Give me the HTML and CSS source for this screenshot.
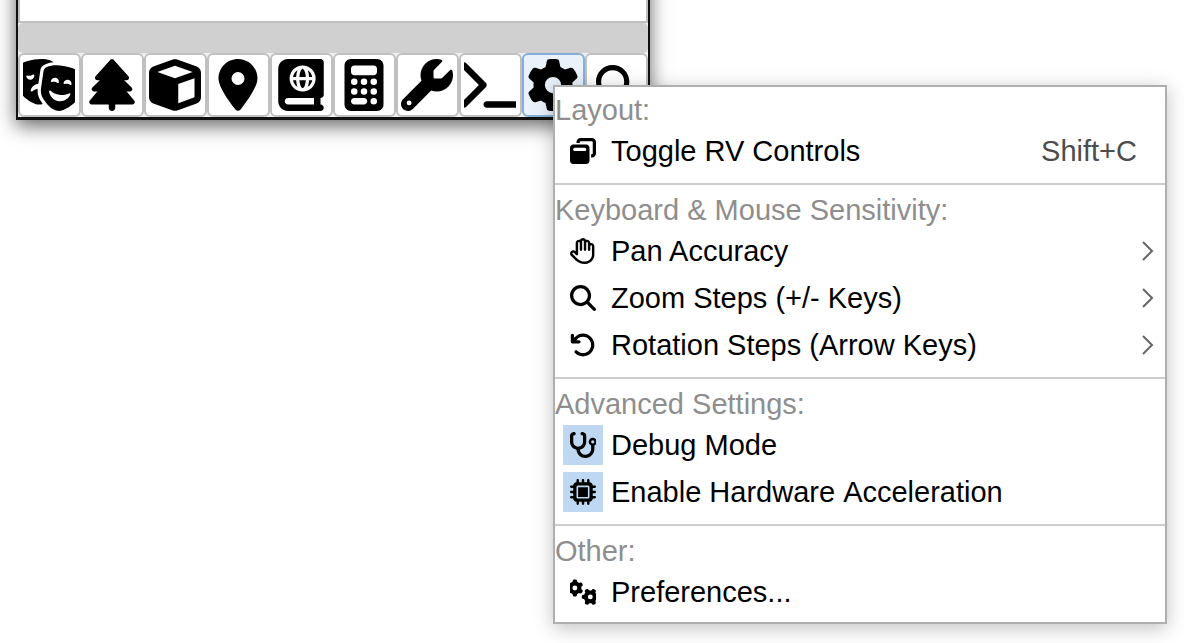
FILE: index.html
```html
<!DOCTYPE html>
<html lang="en">
<head>
<meta charset="utf-8">
<meta name="viewport" content="width=device-width, initial-scale=1">
<title>Settings menu</title>
<link rel="stylesheet" href="styles.css">
</head>
<body>
<main class="window">
  <div class="panel"></div>
  <div class="status"></div>
  <div class="toolbar" role="toolbar" aria-label="Tools">
    <button class="tool" type="button" aria-label="Scenes"><svg viewBox="64 0 512 512"><path d="M74.6 373.2c41.7 36.1 108 82.5 166.1 73.7c6.1-.9 12.1-2.5 18-4.5c-9.2-12.3-17.3-24.4-24.2-35.4c-21.9-35-28.8-75.2-25.9-113.6c-20.6 4.1-39.2 13-54.7 25.4c-6.5 5.2-16.3 1.3-14.8-7c6.4-33.5 33-60.9 68.2-66.3c2.6-.4 5.3-.7 7.9-.8l19.4-131.3c2-13.8 8-32.7 25-45.9C278.2 53.2 310.5 37 363.2 32.2c-.8-.7-1.6-1.4-2.4-2.1C340.6 14.5 288.4-11.5 175.7 5.6S20.5 63 5.7 83.9C0 91.9-.8 102 .6 111.8L24.8 276.1c5.5 37.3 21.5 72.6 49.8 97.2zm87.7-219.6c4.4-3.1 10.8-2 11.8 3.3c.1 .5 .2 1.1 .3 1.6c3.2 21.8-11.6 42-33.1 45.3s-41.5-11.8-44.7-33.5c-.1-.5-.1-1.1-.2-1.6c-.6-5.4 5.2-8.4 10.3-6.7c9 3 18.8 3.9 28.7 2.4s19.1-5.3 26.8-10.8zM261.6 390c29.4 46.9 79.5 110.9 137.6 119.7s124.5-37.5 166.1-73.7c28.3-24.5 44.3-59.8 49.8-97.2l24.2-164.3c1.4-9.8 .6-19.9-5.1-27.9c-14.8-20.9-57.3-61.2-170-78.3S299.4 77.2 279.2 92.8c-7.8 6-11.5 15.4-12.9 25.2L242.1 282.3c-5.5 37.3-.4 75.8 19.6 107.7zM404.5 235.3c-7.7-5.5-16.8-9.3-26.8-10.8s-19.8-.6-28.7 2.4c-5.1 1.7-10.9-1.3-10.3-6.7c.1-.5 .1-1.1 .2-1.6c3.2-21.8 23.2-36.8 44.7-33.5s36.3 23.5 33.1 45.3c-.1 .5-.2 1.1-.3 1.6c-1 5.3-7.4 6.4-11.8 3.3zm136.2 15.5c-1 5.3-7.4 6.4-11.8 3.3c-7.7-5.5-16.8-9.3-26.8-10.8s-19.8-.6-28.7 2.4c-5.1 1.7-10.9-1.3-10.3-6.7c.1-.5 .1-1.1 .2-1.6c3.2-21.8 23.2-36.8 44.7-33.5s36.3 23.5 33.1 45.3c-.1 .5-.2 1.1-.3 1.6zM530 350.2c-19.6 44.7-66.8 72.5-116.8 64.9s-87.1-48.2-93-96.7c-1-8.3 8.9-12.1 15.2-6.7c23.9 20.8 53.6 35.3 87 40.3s66.1 .1 94.9-12.8c7.6-3.4 16 3.2 12.6 10.9z"/></svg></button>
    <button class="tool" type="button" aria-label="Tree"><svg viewBox="-32 0 512 512"><path d="M210.6 5.9L62 169.4c-3.9 4.2-6 9.8-6 15.5C56 197.7 66.3 208 79.1 208H104L30.6 281.4c-4.2 4.2-6.6 10-6.6 16C24 309.9 34.1 320 46.6 320H80L5.4 409.5C1.9 413.7 0 419 0 424.5c0 13 10.5 23.5 23.5 23.5H192v32c0 17.7 14.3 32 32 32s32-14.3 32-32V448H424.5c13 0 23.5-10.5 23.5-23.5c0-5.5-1.9-10.8-5.4-15L368 320h33.4c12.5 0 22.6-10.1 22.6-22.6c0-6-2.4-11.8-6.6-16L344 208h24.9c12.7 0 23.1-10.3 23.1-23.1c0-5.7-2.1-11.3-6-15.5L237.4 5.9C234 2.1 229.1 0 224 0s-10 2.1-13.4 5.9z"/></svg></button>
    <button class="tool" type="button" aria-label="Object"><svg viewBox="0 0 512 512"><path d="M234.5 5.7c13.9-5 29.1-5 43.1 0l192 68.6C495 83.4 512 107.5 512 134.6V377.4c0 27-17 51.2-42.5 60.3l-192 68.6c-13.9 5-29.1 5-43.1 0l-192-68.6C17 428.6 0 404.5 0 377.4V134.6c0-27 17-51.2 42.5-60.3l192-68.6zM256 66L82.3 128 256 190l173.7-62L256 66zm32 368.6l160-57.1v-188L288 246.6v188z"/></svg></button>
    <button class="tool" type="button" aria-label="Location"><svg viewBox="-64 0 512 512"><path d="M215.7 499.2C267 435 384 279.4 384 192C384 86 298 0 192 0S0 86 0 192c0 87.4 117 243 168.3 307.2c12.3 15.3 35.1 15.3 47.4 0zM192 128a64 64 0 1 1 0 128 64 64 0 1 1 0-128z"/></svg></button>
    <button class="tool" type="button" aria-label="Atlas"><svg viewBox="-32 0 512 512"><path d="M0 96C0 43 43 0 96 0H384h32c17.7 0 32 14.3 32 32V352c0 17.7-14.3 32-32 32v64c17.7 0 32 14.3 32 32s-14.3 32-32 32H384 96c-53 0-96-43-96-96V96zM64 416c0 17.7 14.3 32 32 32H352V384H96c-17.7 0-32 14.3-32 32zM247.4 283.8c-3.7 3.7-6.2 4.2-7.4 4.2s-3.7-.5-7.4-4.2c-3.8-3.7-8-10-11.8-18.9c-6.2-14.5-10.8-34.3-12.2-56.9h63c-1.5 22.6-6 42.4-12.2 56.9c-3.8 8.9-8 15.2-11.8 18.9zm42.7-9.9c7.3-18.3 12-41.1 13.4-65.9h31.1c-4.7 27.9-21.4 51.7-44.5 65.9zm0-163.8c23.2 14.2 39.9 38 44.5 65.9H303.5c-1.4-24.7-6.1-47.5-13.4-65.9zM368 192a128 128 0 1 0 -256 0 128 128 0 1 0 256 0zM145.3 208h31.1c1.4 24.7 6.1 47.5 13.4 65.9c-23.2-14.2-39.9-38-44.5-65.9zm31.1-32H145.3c4.7-27.9 21.4-51.7 44.5-65.9c-7.3 18.3-12 41.1-13.4 65.9zm56.1-75.8c3.7-3.7 6.2-4.2 7.4-4.2s3.7 .5 7.4 4.2c3.8 3.7 8 10 11.8 18.9c6.2 14.5 10.8 34.3 12.2 56.9h-63c1.5-22.6 6-42.4 12.2-56.9c3.8-8.9 8-15.2 11.8-18.9z"/></svg></button>
    <button class="tool" type="button" aria-label="Calculator"><svg viewBox="-64 0 512 512"><path d="M64 0C28.7 0 0 28.7 0 64V448c0 35.3 28.7 64 64 64H320c35.3 0 64-28.7 64-64V64c0-35.3-28.7-64-64-64H64zM96 64H288c17.7 0 32 14.3 32 32v32c0 17.7-14.3 32-32 32H96c-17.7 0-32-14.3-32-32V96c0-17.7 14.3-32 32-32zm32 160a32 32 0 1 1 -64 0 32 32 0 1 1 64 0zM96 352a32 32 0 1 1 0-64 32 32 0 1 1 0 64zM64 416c0-17.7 14.3-32 32-32h96c17.7 0 32 14.3 32 32s-14.3 32-32 32H96c-17.7 0-32-14.3-32-32zM192 256a32 32 0 1 1 0-64 32 32 0 1 1 0 64zm32 64a32 32 0 1 1 -64 0 32 32 0 1 1 64 0zm64-64a32 32 0 1 1 0-64 32 32 0 1 1 0 64zm32 64a32 32 0 1 1 -64 0 32 32 0 1 1 64 0zM288 448a32 32 0 1 1 0-64 32 32 0 1 1 0 64z"/></svg></button>
    <button class="tool" type="button" aria-label="Tools"><svg viewBox="0 0 512 512"><path d="M352 320c88.4 0 160-71.6 160-160c0-15.3-2.2-30.1-6.2-44.2c-3.1-10.8-16.4-13.2-24.3-5.3l-76.8 76.8c-3 3-7.1 4.7-11.3 4.7H336c-8.8 0-16-7.2-16-16V118.6c0-4.2 1.7-8.3 4.7-11.3l76.8-76.8c7.9-7.9 5.4-21.2-5.3-24.3C382.1 2.2 367.3 0 352 0C263.6 0 192 71.6 192 160c0 19.1 3.4 37.5 9.5 54.5L19.9 396.1C7.2 408.8 0 426.1 0 444.1C0 481.6 30.4 512 67.9 512c18 0 35.3-7.2 48-19.9L297.5 310.5c17 6.2 35.4 9.5 54.5 9.5zM80 408a24 24 0 1 1 0 48 24 24 0 1 1 0-48z"/></svg></button>
    <button class="tool" type="button" aria-label="Console"><svg viewBox="32 0 512 512"><path d="M9.4 86.6C-3.1 74.1-3.1 53.9 9.4 41.4s32.8-12.5 45.3 0l192 192c12.5 12.5 12.5 32.8 0 45.3l-192 192c-12.5 12.5-32.8 12.5-45.3 0s-12.5-32.8 0-45.3L178.7 256 9.4 86.6zM256 416H544c17.7 0 32 14.3 32 32s-14.3 32-32 32H256c-17.7 0-32-14.3-32-32s14.3-32 32-32z"/></svg></button>
    <div class="tool-group">
      <button class="tool tool-open" type="button" aria-label="Settings" aria-haspopup="menu" aria-expanded="true"><svg viewBox="0 0 512 512"><path d="M495.9 166.6c3.2 8.7 .5 18.4-6.4 24.6l-43.3 39.4c1.1 8.3 1.7 16.8 1.7 25.4s-.6 17.1-1.7 25.4l43.3 39.4c6.9 6.2 9.6 15.9 6.4 24.6c-4.4 11.9-9.7 23.3-15.8 34.3l-4.7 8.1c-6.6 11-14 21.4-22.1 31.2c-5.9 7.2-15.7 9.6-24.5 6.8l-55.7-17.7c-13.4 10.3-28.2 18.9-44 25.4l-12.5 57.1c-2 9.1-9 16.3-18.2 17.8c-13.8 2.3-28 3.5-42.5 3.5s-28.7-1.2-42.5-3.5c-9.2-1.5-16.2-8.7-18.2-17.8l-12.5-57.1c-15.8-6.5-30.6-15.1-44-25.4L83.1 425.9c-8.8 2.8-18.6 .3-24.5-6.8c-8.1-9.8-15.5-20.2-22.1-31.2l-4.7-8.1c-6.1-11-11.4-22.4-15.8-34.3c-3.2-8.7-.5-18.4 6.4-24.6l43.3-39.4C64.6 273.1 64 264.6 64 256s.6-17.1 1.7-25.4L22.4 191.2c-6.9-6.2-9.6-15.9-6.4-24.6c4.4-11.9 9.7-23.3 15.8-34.3l4.7-8.1c6.6-11 14-21.4 22.1-31.2c5.9-7.2 15.7-9.6 24.5-6.8l55.7 17.7c13.4-10.3 28.2-18.9 44-25.4l12.5-57.1c2-9.1 9-16.3 18.2-17.8C227.3 1.2 241.5 0 256 0s28.7 1.2 42.5 3.5c9.2 1.5 16.2 8.7 18.2 17.8l12.5 57.1c15.8 6.5 30.6 15.1 44 25.4l55.7-17.7c8.8-2.8 18.6-.3 24.5 6.8c8.1 9.8 15.5 20.2 22.1 31.2l4.7 8.1c6.1 11 11.4 22.4 15.8 34.3zM256 336a80 80 0 1 0 0-160 80 80 0 1 0 0 160z"/></svg></button>
      <div class="menu" role="menu" aria-label="Settings">
        <section class="section">
          <h2 class="heading">Layout:</h2>
          <button class="item" type="button" role="menuitem"><span class="icon"><svg viewBox="0 0 512 512"><path d="M432 64H208c-8.8 0-16 7.2-16 16V96H128V80c0-44.2 35.8-80 80-80H432c44.2 0 80 35.8 80 80V304c0 44.2-35.8 80-80 80H416V320h16c8.8 0 16-7.2 16-16V80c0-8.8-7.2-16-16-16zM0 192c0-35.3 28.7-64 64-64H320c35.3 0 64 28.7 64 64V448c0 35.3-28.7 64-64 64H64c-35.3 0-64-28.7-64-64V192zm64 32c0 17.7 14.3 32 32 32H288c17.7 0 32-14.3 32-32s-14.3-32-32-32H96c-17.7 0-32 14.3-32 32z"/></svg></span><span class="label">Toggle RV Controls</span><span class="shortcut">Shift+C</span></button>
        </section>
        <section class="section">
          <h2 class="heading">Keyboard &amp; Mouse Sensitivity:</h2>
          <button class="item" type="button" role="menuitem" aria-haspopup="menu"><span class="icon"><svg viewBox="0 0 512 512"><path d="M256 0c-25.3 0-47.2 14.7-57.6 36c-7-2.6-14.5-4-22.4-4c-35.3 0-64 28.7-64 64V261.5l-2.7-2.7c-25-25-65.5-25-90.5 0s-25 65.5 0 90.5L106.5 437c48 48 113.1 75 181 75H296h8c1.5 0 3-.1 4.5-.4c91.7-6.2 165-79.4 171.1-171.1c.3-1.5 .4-3 .4-4.5V160c0-35.3-28.7-64-64-64c-5.5 0-10.9 .7-16 2V96c0-35.3-28.7-64-64-64c-7.9 0-15.4 1.4-22.4 4C303.2 14.7 281.3 0 256 0zM240 96.1c0 0 0-.1 0-.1V64c0-8.8 7.2-16 16-16s16 7.2 16 16V95.9c0 0 0 .1 0 .1V232c0 13.3 10.7 24 24 24s24-10.7 24-24V96c0 0 0 0 0-.1c0-8.8 7.2-16 16-16s16 7.2 16 16v55.9c0 0 0 .1 0 .1v80c0 13.3 10.7 24 24 24s24-10.7 24-24V160.1c0 0 0-.1 0-.1c0-8.8 7.2-16 16-16s16 7.2 16 16V332.9c-.1 .6-.1 1.3-.2 1.9c-3.4 69.7-59.3 125.6-129 129c-.6 0-1.3 .1-1.9 .2H296h-8.5c-55.2 0-108.1-21.9-147.1-60.9L52.7 315.3c-6.2-6.2-6.2-16.4 0-22.6s16.4-6.2 22.6 0L119 336.4c6.9 6.9 17.2 8.9 26.2 5.2s14.8-12.5 14.8-22.2V96c0-8.8 7.2-16 16-16c8.8 0 16 7.1 16 15.9V232c0 13.3 10.7 24 24 24s24-10.7 24-24V96.1z"/></svg></span><span class="label">Pan Accuracy</span><svg class="chevron" viewBox="0 0 12 20"><path d="M1 1l9 9-9 9"/></svg></button>
          <button class="item" type="button" role="menuitem" aria-haspopup="menu"><span class="icon"><svg viewBox="0 0 512 512"><path d="M416 208c0 45.9-14.9 88.3-40 122.7L502.6 457.4c12.5 12.5 12.5 32.8 0 45.3s-32.8 12.5-45.3 0L330.7 376c-34.4 25.2-76.8 40-122.7 40C93.1 416 0 322.9 0 208S93.1 0 208 0S416 93.1 416 208zM208 352a144 144 0 1 0 0-288 144 144 0 1 0 0 288z"/></svg></span><span class="label">Zoom Steps (+/- Keys)</span><svg class="chevron" viewBox="0 0 12 20"><path d="M1 1l9 9-9 9"/></svg></button>
          <button class="item" type="button" role="menuitem" aria-haspopup="menu"><span class="icon"><svg viewBox="0 0 512 512"><path d="M125.7 160H176c17.7 0 32 14.3 32 32s-14.3 32-32 32H48c-17.7 0-32-14.3-32-32V64c0-17.7 14.3-32 32-32s32 14.3 32 32v51.2L97.6 97.6c87.5-87.5 229.3-87.5 316.8 0s87.5 229.3 0 316.8s-229.3 87.5-316.8 0c-12.5-12.5-12.5-32.8 0-45.3s32.8-12.5 45.3 0c62.5 62.5 163.8 62.5 226.3 0s62.5-163.8 0-226.3s-163.8-62.5-226.3 0L125.7 160z"/></svg></span><span class="label">Rotation Steps (Arrow Keys)</span><svg class="chevron" viewBox="0 0 12 20"><path d="M1 1l9 9-9 9"/></svg></button>
        </section>
        <section class="section">
          <h2 class="heading">Advanced Settings:</h2>
          <label class="item"><span class="icon"><input class="check" type="checkbox" checked><svg viewBox="32 0 512 512"><path d="M142.4 21.9c5.6 16.8-3.5 34.9-20.2 40.5L96 71.1V192c0 53 43 96 96 96s96-43 96-96V71.1l-26.1-8.7c-16.8-5.6-25.8-23.7-20.2-40.5s23.7-25.8 40.5-20.2l26.1 8.7C334.4 19.1 352 43.5 352 71.1V192c0 77.2-54.6 141.6-127.3 156.7C231 404.6 278.4 448 336 448c61.9 0 112-50.1 112-112V265.3c-28.3-12.3-48-40.5-48-73.3c0-44.2 35.8-80 80-80s80 35.8 80 80c0 32.8-19.7 61-48 73.3V336c0 97.2-78.8 176-176 176c-92.9 0-168.9-71.9-175.5-163.1C87.2 334.2 32 269.6 32 192V71.1c0-27.5 17.6-52 43.8-60.7l26.1-8.7c16.8-5.6 34.9 3.5 40.5 20.2zM480 224a32 32 0 1 0 0-64 32 32 0 1 0 0 64z"/></svg></span><span class="label">Debug Mode</span></label>
          <label class="item"><span class="icon"><input class="check" type="checkbox" checked><svg viewBox="0 0 512 512"><path d="M176 24c0-13.3-10.7-24-24-24s-24 10.7-24 24V64c-35.3 0-64 28.7-64 64H24c-13.3 0-24 10.7-24 24s10.7 24 24 24H64v56H24c-13.3 0-24 10.7-24 24s10.7 24 24 24H64v56H24c-13.3 0-24 10.7-24 24s10.7 24 24 24H64c0 35.3 28.7 64 64 64v40c0 13.3 10.7 24 24 24s24-10.7 24-24V448h56v40c0 13.3 10.7 24 24 24s24-10.7 24-24V448h56v40c0 13.3 10.7 24 24 24s24-10.7 24-24V448c35.3 0 64-28.7 64-64h40c13.3 0 24-10.7 24-24s-10.7-24-24-24H448V280h40c13.3 0 24-10.7 24-24s-10.7-24-24-24H448V176h40c13.3 0 24-10.7 24-24s-10.7-24-24-24H448c0-35.3-28.7-64-64-64V24c0-13.3-10.7-24-24-24s-24 10.7-24 24V64H280V24c0-13.3-10.7-24-24-24s-24 10.7-24 24V64H176V24zM160 128H352c17.7 0 32 14.3 32 32V352c0 17.7-14.3 32-32 32H160c-17.7 0-32-14.3-32-32V160c0-17.7 14.3-32 32-32zm192 32H160V352H352V160z"/></svg></span><span class="label">Enable Hardware Acceleration</span></label>
        </section>
        <section class="section">
          <h2 class="heading">Other:</h2>
          <button class="item" type="button" role="menuitem"><span class="icon"><svg viewBox="64 0 512 512"><defs><path id="cog" d="M308.5 135.3c7.1-6.3 9.9-16.2 6.2-25c-2.3-5.3-4.8-10.5-7.6-15.5L304 89.4c-3-5-6.3-9.9-9.8-14.6c-5.7-7.6-15.7-10.1-24.7-7.1l-28.2 9.3c-10.7-8.8-23-16-36.2-20.9L199 27.1c-1.9-9.3-9.1-16.7-18.5-17.8C173.9 8.4 167.2 8 160.4 8h-.7c-6.8 0-13.5 .4-20.1 1.2c-9.4 1.1-16.6 8.6-18.5 17.8L115 56.1c-13.3 5-25.5 12.1-36.2 20.9L50.5 67.8c-9-3-19-.5-24.7 7.1c-3.5 4.7-6.8 9.6-9.9 14.6l-3 5.3c-2.8 5-5.3 10.2-7.6 15.6c-3.7 8.7-.9 18.6 6.2 25l22.2 19.8C32.6 161.9 32 168.9 32 176s.6 14.1 1.7 20.9L11.5 216.7c-7.1 6.3-9.9 16.2-6.2 25c2.3 5.3 4.8 10.5 7.6 15.6l3 5.2c3 5.1 6.3 9.9 9.9 14.6c5.7 7.6 15.7 10.1 24.7 7.1l28.2-9.3c10.7 8.8 23 16 36.2 20.9l6.1 29.1c1.9 9.3 9.1 16.7 18.5 17.8c6.7 .8 13.5 1.2 20.4 1.2s13.7-.4 20.4-1.2c9.4-1.1 16.6-8.6 18.5-17.8l6.1-29.1c13.3-5 25.5-12.1 36.2-20.9l28.2 9.3c9 3 19 .5 24.7-7.1c3.5-4.7 6.8-9.5 9.8-14.6l3.1-5.4c2.8-5 5.3-10.2 7.6-15.5c3.7-8.7 .9-18.6-6.2-25l-22.2-19.8c1.1-6.8 1.7-13.8 1.7-20.9s-.6-14.1-1.7-20.9l22.2-19.8zM112 176a48 48 0 1 1 96 0 48 48 0 1 1 -96 0z"/></defs><use href="#cog"/><use href="#cog" transform="translate(464 352) rotate(90) translate(-160 -176)"/></svg></span><span class="label">Preferences...</span></button>
        </section>
      </div>
    </div>
    <button class="tool tool-small" type="button" aria-label="Search"><svg viewBox="0 0 512 512"><path d="M416 208c0 45.9-14.9 88.3-40 122.7L502.6 457.4c12.5 12.5 12.5 32.8 0 45.3s-32.8 12.5-45.3 0L330.7 376c-34.4 25.2-76.8 40-122.7 40C93.1 416 0 322.9 0 208S93.1 0 208 0S416 93.1 416 208zM208 352a144 144 0 1 0 0-288 144 144 0 1 0 0 288z"/></svg></button>
  </div>
</main>
</body>
</html>
```
FILE: styles.css
```css
* {
  box-sizing: border-box;
}

body {
  display: flow-root;
  min-height: 100vh;
  margin: 0;
  background: #fff;
  color: #000;
  font: 29px/34px "Liberation Sans", Arial, sans-serif;
}

svg {
  display: block;
  fill: currentColor;
  fill-rule: evenodd;
}

/* The window starts above the visible area */
.window {
  width: max-content;
  margin: -60px 0 0 16px;
  border: 2px solid #111;
  border-bottom-width: 3px;
  background: #f0f0f0;
  box-shadow: 0 6px 18px rgba(0, 0, 0, 0.6);
}

.panel {
  height: 81px;
  border: 2px solid #c0c0c0;
  background: #fff;
}

.status {
  height: 30px;
  border-radius: 5px;
  background: #d0d0d0;
}

.toolbar {
  display: flex;
}

.tool {
  display: flex;
  align-items: center;
  width: 63px;
  height: 64px;
  margin: 0;
  padding: 0 3px;
  border: 2px solid #c0c0c0;
  border-radius: 6px;
  background: #fff;
  color: #000;
}

.tool svg {
  width: 52px;
  height: 52px;
}

.tool-small {
  padding: 0 9px;
}

.tool-small svg {
  width: 41px;
  height: 41px;
}

.tool-open {
  border-color: #86aed6;
  background: #e9f1fb;
}

.tool-group {
  position: relative;
}

.menu {
  position: absolute;
  top: 32px;
  left: 31px;
  z-index: 1;
  min-width: 614px;
  padding-bottom: 6px;
  border: 2px solid #afafaf;
  background: #fff;
  box-shadow: 0 4px 18px rgba(0, 0, 0, 0.25);
  font-kerning: none;
  white-space: nowrap;
}

.section + .section {
  margin-top: 8px;
  padding-top: 2px;
  border-top: 2px solid #cdcdcd;
}

.heading {
  margin: 0;
  padding: 6px 0 1px;
  color: #8e8e8e;
  font-size: 29px;
  font-weight: 400;
}

.item {
  display: flex;
  align-items: center;
  width: 100%;
  height: 47px;
  margin: 0;
  padding: 0 11px 1px 8px;
  border: 0;
  background: none;
  color: #000;
  font-family: inherit;
  font-size: 29px;
  line-height: 34px;
  text-align: left;
}

.icon {
  display: grid;
  place-items: center;
  width: 40px;
  height: 40px;
  margin-right: 8px;
}

.icon > * {
  grid-area: 1 / 1;
}

.icon svg {
  width: 26px;
  height: 26px;
}

.check {
  appearance: none;
  width: 40px;
  height: 40px;
  margin: 0;
}

.check:checked {
  background: #bfd8f1;
}

.label {
  flex: 1;
}

.shortcut {
  margin-right: 17px;
  color: #4d4d4d;
}

.chevron {
  width: 12px;
  height: 20px;
  fill: none;
  stroke: #666;
  stroke-width: 2;
}
```
